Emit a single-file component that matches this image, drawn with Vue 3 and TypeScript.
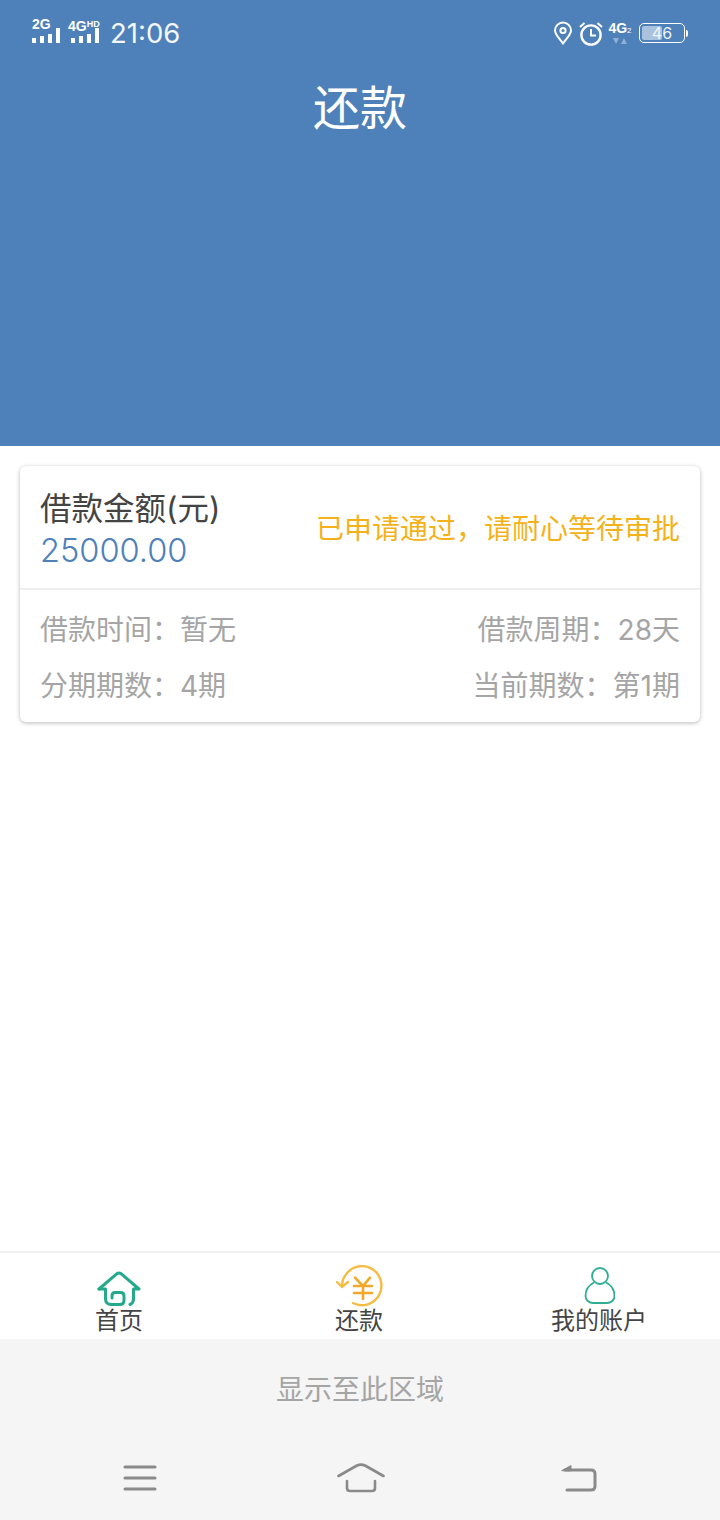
<template>
  <div class="page">
    <header class="header">
      <div class="status">
        <div class="status-left">
          <div class="sim">
            <span class="sim-label">2G</span>
            <div class="bars"><i v-for="h in barHeights" :key="h" :style="{ height: h + 'px' }"></i></div>
          </div>
          <div class="sim">
            <span class="sim-label second">4G<small>HD</small></span>
            <div class="bars"><i v-for="h in barHeights" :key="h" :style="{ height: h + 'px' }"></i></div>
          </div>
          <span class="clock">21:06</span>
        </div>
        <div class="status-right">
          <svg class="pin" width="20" height="24" viewBox="0 0 20 24" fill="none" stroke="#fff" stroke-width="2">
            <path d="M10 22.5 C6 17 2 13.5 2 9.5 a8 8 0 0 1 16 0 C18 13.5 14 17 10 22.5 Z" />
            <circle cx="10" cy="9.5" r="2.6" />
          </svg>
          <svg class="alarm" width="24" height="25" viewBox="0 0 24 25" fill="none" stroke="#fff" stroke-width="2.4">
            <circle cx="12" cy="14" r="9.6" />
            <path d="M12 8 V14.5 H17" stroke-width="2" />
            <path d="M1 6 L5.5 2 M23 6 L18.5 2" stroke-width="2" />
          </svg>
          <div class="net">
            <span class="net-label">4G<small>2</small></span>
            <svg width="14" height="7" viewBox="0 0 14 7" fill="#8fb0d6">
              <path d="M0 0 H6 L3 6 Z M8 6 H14 L11 0 Z" />
            </svg>
          </div>
          <div class="battery">
            <div class="battery-fill"></div>
            <span class="battery-num">46</span>
          </div>
          <div class="battery-cap"></div>
        </div>
      </div>
      <h1 class="title">还款</h1>
    </header>

    <main class="content">
      <section class="card">
        <div class="card-top">
          <div class="amount-box">
            <div class="amount-label">借款金额(元)</div>
            <div class="amount">25000.00</div>
          </div>
          <div class="state">已申请通过，请耐心等待审批</div>
        </div>
        <div class="card-info">
          <div class="info-row" v-for="row in infoRows" :key="row[0]">
            <span>{{ row[0] }}</span>
            <span>{{ row[1] }}</span>
          </div>
        </div>
      </section>
    </main>

    <nav class="tabbar">
      <div class="tab">
        <svg width="46" height="36" viewBox="-1 0 46 36" fill="none" stroke="#25a98d" stroke-width="3" stroke-linejoin="round" stroke-linecap="round">
          <path d="M2 18 L20 2.6 Q22 1.4 24 2.6 L42 18 H36.5 V28 Q36.5 32 33 33.5" />
          <path d="M2 18 H8.5 V28 Q8.5 33.5 14.5 33.5 H23 Q27 33.5 27 29 V25 Q27 21.5 23.5 21.5 H18 Q15 21.5 15 25 V27" />
        </svg>
        <span>首页</span>
      </div>
      <div class="tab">
        <svg width="48" height="42" viewBox="-1 0 48 42" fill="none" stroke="#f5bd45" stroke-width="2.4" stroke-linecap="round">
          <path d="M9 11 A19.5 19.5 0 1 1 17 38" />
          <path d="M6 22 Q6 15 9 11 M1 17 L6 22 L12 17" />
          <path d="M19 12.7 L27 21 L34 12.7 M18 21 H36 M18 28 H36 M27 21 V34" stroke="#f0a92b" stroke-width="2.6" />
        </svg>
        <span>还款</span>
      </div>
      <div class="tab">
        <svg width="32" height="40" viewBox="-1 0 32 40" fill="none" stroke="#2fae94" stroke-width="1.8">
          <circle cx="16" cy="9" r="8" />
          <path d="M10 15.5 C5 18 1.5 23 1.5 29 C1.5 33 5 36 9 36 H23 C27 36 30.5 33 30.5 29 C30.5 23 27 18 22 15.5" />
        </svg>
        <span>我的账户</span>
      </div>
    </nav>

    <footer class="system">
      <div class="system-hint">显示至此区域</div>
      <div class="system-keys">
        <svg width="34" height="26" viewBox="0 0 34 26" fill="none" stroke="#8a8a8a" stroke-width="3" stroke-linecap="round">
          <path d="M2 2 H32 M2 13 H32 M2 24 H32" />
        </svg>
        <svg class="key-home" width="48" height="30" viewBox="0 0 48 30" fill="none" stroke="#8a8a8a" stroke-width="2.6" stroke-linecap="round" stroke-linejoin="round">
          <path d="M1.5 13 L20 2.5 Q24 0.8 28 2.5 L46.5 13" />
          <path d="M10 18 V25 Q10 28 13 28 H35 Q38 28 38 25 V18" />
        </svg>
        <svg width="36" height="28" viewBox="0 0 36 28" fill="none" stroke="#8a8a8a" stroke-width="3" stroke-linecap="round" stroke-linejoin="round">
          <path d="M4 6 H30 Q34 6 34 10 V22 Q34 26 30 26 H6" />
          <path d="M1 6.5 L10 1.5 V6.5 Z" fill="#8a8a8a" stroke-width="1" />
        </svg>
      </div>
    </footer>
  </div>
</template>

<script setup lang="ts">
const barHeights: number[] = [5, 7, 9, 15]

const infoRows: [string, string][] = [
  ['借款时间：暂无', '借款周期：28天'],
  ['分期期数：4期', '当前期数：第1期']
]
</script>

<style>
html,
body {
  margin: 0;
  background: #fff;
}
</style>

<style scoped>
.page {
  width: 720px;
  height: 1520px;
  display: flex;
  flex-direction: column;
  overflow: hidden;
  font-family: Inter, "Noto Sans CJK SC", sans-serif;
  background: #fff;
}

.header {
  height: 446px;
  flex-shrink: 0;
  background: #4e81b9;
  color: #fff;
}

.status {
  height: 66px;
  padding: 0 32px;
  display: flex;
  align-items: center;
  justify-content: space-between;
}

.status-left {
  display: flex;
  align-items: center;
}

.sim {
  width: 39px;
  height: 24px;
  margin-bottom: 4px;
  position: relative;
}

.sim-label {
  display: block;
  margin-top: -1px;
  font: 700 14px/12px "Liberation Sans", sans-serif;
  white-space: nowrap;
}

.sim-label.second {
  margin-left: -3px;
}

.sim-label small {
  font-size: 9px;
  vertical-align: 4px;
}

.bars {
  position: absolute;
  left: 0;
  bottom: 0;
  display: flex;
  align-items: flex-end;
  gap: 4px;
  height: 16px;
}

.bars i {
  display: block;
  width: 4px;
  background: #fff;
}

.clock {
  font-size: 27.5px;
  line-height: 34px;
  color: #f4f7fb;
}

.status-right {
  display: flex;
  align-items: center;
}

.pin {
  margin-right: 6px;
}

.alarm {
  margin-right: 3px;
}

.net {
  width: 28px;
  display: flex;
  flex-direction: column;
  align-items: center;
  margin-right: 5px;
}

.net-label {
  font: 700 14px/15px "Liberation Sans", sans-serif;
  white-space: nowrap;
}

.net-label small {
  font-size: 8px;
  font-weight: 400;
}

.battery {
  position: relative;
  width: 44px;
  height: 18px;
  border: 1px solid #fff;
  border-radius: 5px;
  display: flex;
  align-items: center;
  justify-content: center;
}

.battery-fill {
  position: absolute;
  left: 2px;
  top: 2px;
  bottom: 2px;
  width: 20px;
  border-radius: 2px;
  background: #a9c2de;
}

.battery-num {
  position: relative;
  font-size: 16px;
  line-height: 16px;
  color: #f1f5fa;
}

.battery-cap {
  width: 2px;
  height: 7px;
  margin-left: 1px;
  background: #fff;
  border-radius: 0 2px 2px 0;
}

.title {
  margin: 0;
  text-align: center;
  font-size: 47px;
  font-weight: 400;
  line-height: 84px;
}

.content {
  flex: 1;
  padding: 20px;
}

.card {
  height: 256px;
  box-sizing: border-box;
  border-radius: 6px;
  background: #fff;
  box-shadow: 0 1px 4px rgba(0, 0, 0, 0.28);
  display: flex;
  flex-direction: column;
}

.card-top {
  height: 124px;
  box-sizing: border-box;
  padding: 0 20px;
  display: flex;
  align-items: center;
  justify-content: space-between;
  border-bottom: 2px solid #eeeeee;
}

.amount-box {
  padding-top: 2px;
}

.amount-label {
  font-size: 31.5px;
  line-height: 44px;
  color: #444;
}

.amount {
  font-size: 32.6px;
  font-weight: 300;
  line-height: 38px;
  color: #4e81b9;
}

.state {
  font-size: 28px;
  color: #f4b21a;
}

.card-info {
  padding: 10px 20px 0;
}

.info-row {
  height: 56px;
  display: flex;
  align-items: center;
  justify-content: space-between;
  font-size: 28px;
  color: #a5a5a5;
}

.tabbar {
  height: 88px;
  flex-shrink: 0;
  box-sizing: border-box;
  border-top: 2px solid #f0f0f0;
  display: grid;
  grid-template-columns: repeat(3, 240px);
  background: #fff;
}

.tab {
  display: flex;
  flex-direction: column;
  align-items: center;
  justify-content: flex-end;
  padding: 0 2px 4px 0;
  font-size: 24px;
  line-height: 28px;
  color: #444;
}

.tab svg {
  display: block;
}

.system {
  height: 181px;
  flex-shrink: 0;
  background: #f5f5f5;
}

.system-hint {
  padding-top: 30px;
  text-align: center;
  font-size: 28px;
  line-height: 42px;
  color: #a5a5a5;
}

.system-keys {
  margin-top: 52px;
  padding: 0 123px;
  display: flex;
  align-items: center;
  justify-content: space-between;
}

.key-home {
  margin-left: 3px;
}
</style>
